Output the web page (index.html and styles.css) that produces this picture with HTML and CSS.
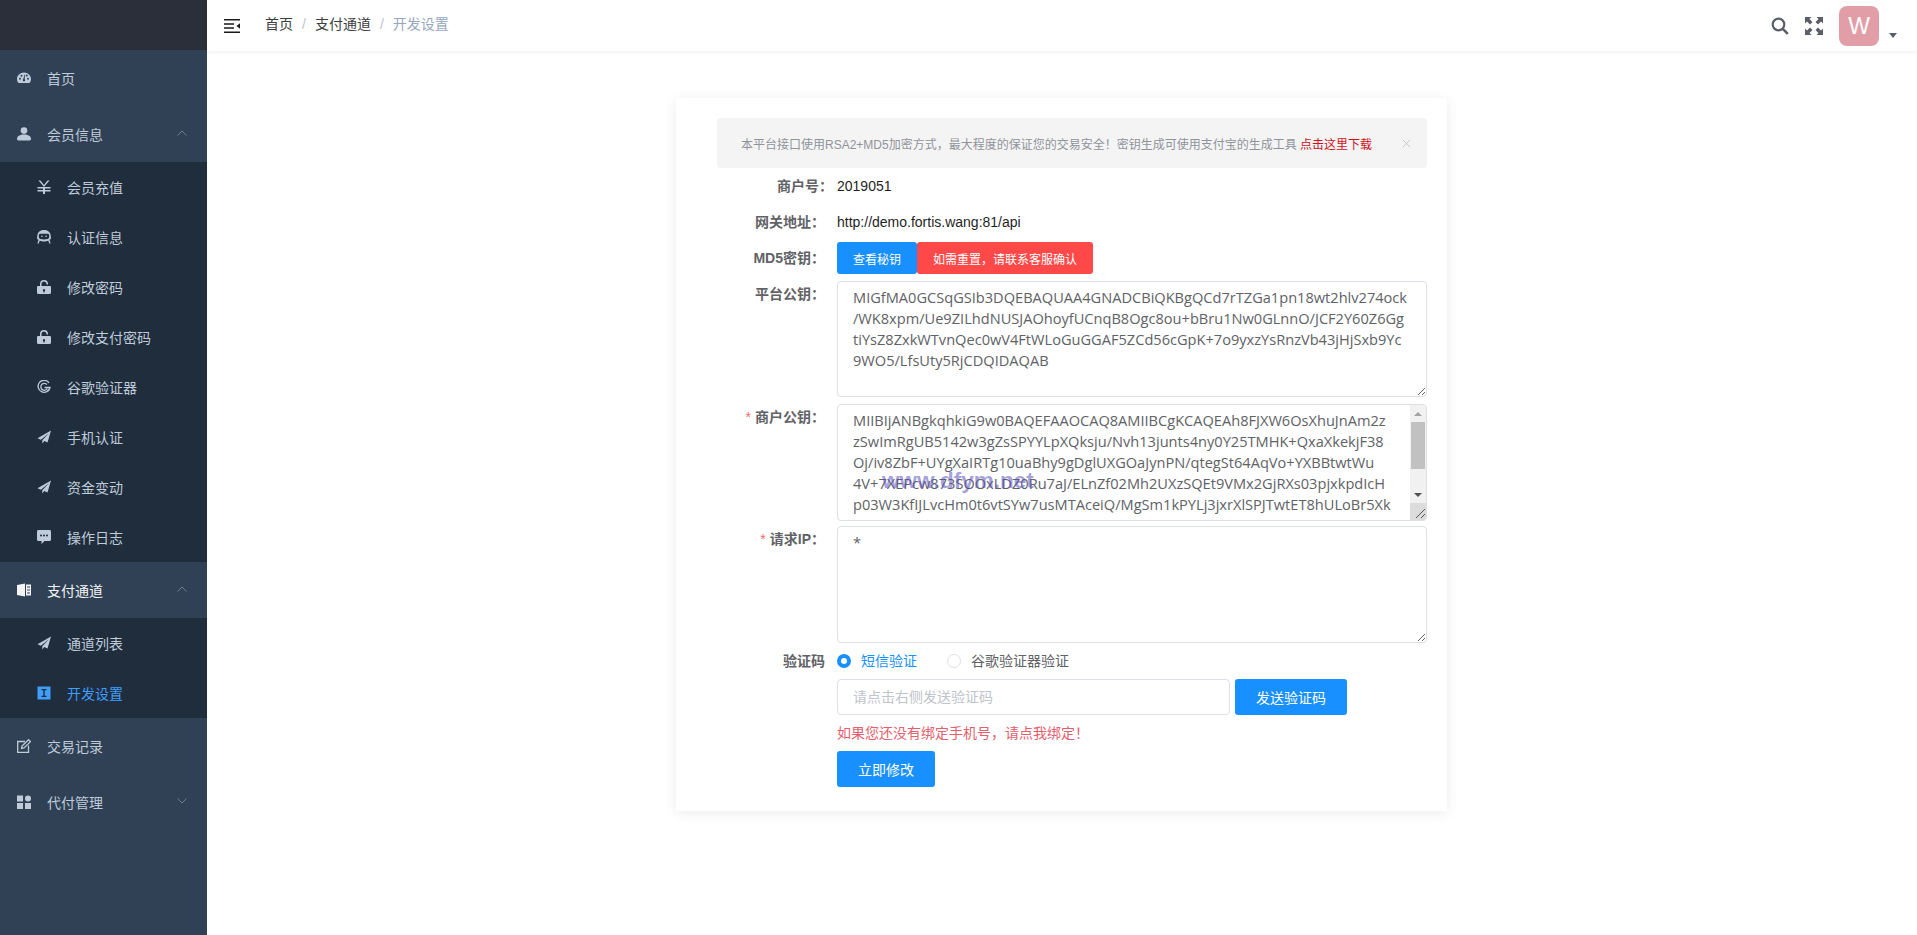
FILE: index.html
```html
<!DOCTYPE html>
<html lang="zh-CN">
<head>
    <meta charset="UTF-8">
    <meta name="viewport" content="width=device-width, initial-scale=1.0">
    <title>开发设置</title>
    <link rel="stylesheet" href="styles.css">
</head>
<body>
    <div class="app">
        <aside class="sidebar">
            <div class="logo"></div>
            <nav class="menu">
                <a class="menu-title">
                    <svg class="icon" viewBox="0 0 14 14"><path fill-rule="evenodd" d="M7 1.5C3 1.5 0 4.5 0 8.2c0 1.4.4 2.5 1 3.3.2.3.5.4.8.4h10.4c.3 0 .6-.1.8-.4.6-.8 1-1.900 1-3.300C14 4.500 11 1.500 7 1.500zM3 8.800a1 1 0 1 1 0-2 1 1 0 0 1 0 2zm1.500-3a1 1 0 1 1 0-2 1 1 0 0 1 0 2zM7 10.500a1.300 1.300 0 0 1-.6-2.400l.9-4.300h.6l-.2 4.400A1.300 1.300 0 0 1 7 10.500zm2.700-5a1 1 0 1 1 0-2 1 1 0 0 1 0 2zm1.300 3.300a1 1 0 1 1 0-2 1 1 0 0 1 0 2z"/></svg>
                    <span>首页</span>
                </a>
                <a class="menu-title">
                    <svg class="icon" viewBox="0 0 14 14"><circle cx="7" cy="3.6" r="3.3"/><path d="M0 12c0-3 3-4.6 7-4.6s7 1.6 7 4.6c0 1-.6 1.4-1.5 1.4h-11C.6 13.4 0 13 0 12z"/></svg>
                    <span>会员信息</span>
                    <svg class="arrow" viewBox="0 0 10 6"><path d="M.5 5.500 5 1l4.500 4.500"/></svg>
                </a>
                <div class="submenu">
                    <a class="sub-item">
                        <svg class="icon" viewBox="0 0 14 14"><path d="M1.500.5 7 7 12.500.5h-2L7 4.900 3.500.5zM6 7h2v7H6z"/><path d="M.5 7h13v1.500H.5zM.5 10h13v1.500H.5z"/></svg>
                        <span>会员充值</span>
                    </a>
                    <a class="sub-item">
                        <svg class="icon" viewBox="0 0 14 14"><path fill-rule="evenodd" d="M7 0C3.600 0 1 1.800.5 4.500L0 7.800c0 1 .8 1.700 1.500 2L.4 13.600h1.300l1.100-3.200c1 .6 2.600 1 4.200 1s3.200-.4 4.200-1l1.100 3.200h1.300L12.500 9.800c.7-.3 1.500-1 1.500-2l-.5-3.300C13 1.800 10.400 0 7 0zM3.300 3.800h7.400c.9 0 1.500.7 1.500 1.500v1.800c0 1-.8 1.700-1.700 1.900-1 .3-2.200.5-3.500.5s-2.500-.2-3.500-.5c-.9-.2-1.700-.9-1.700-1.900V5.300c0-.8.600-1.500 1.500-1.500z"/><circle cx="4.900" cy="6.200" r=".8"/><circle cx="9.100" cy="6.200" r=".8"/></svg>
                        <span>认证信息</span>
                    </a>
                    <a class="sub-item">
                        <svg class="icon" viewBox="0 0 14 14"><path fill-rule="evenodd" d="M3 6V4a4 4 0 0 1 8 0v.500H9.500V4a2.500 2.500 0 0 0-5 0v2h8.300c.7 0 1.200.5 1.200 1.200v5.600c0 .7-.5 1.200-1.200 1.200H1.200C.5 14 0 13.500 0 12.800V7.200C0 6.500.5 6 1.200 6zm4 3a1.200 1.200 0 0 0-.6 2.200v1.300h1.200v-1.300A1.200 1.200 0 0 0 7 9z"/></svg>
                        <span>修改密码</span>
                    </a>
                    <a class="sub-item">
                        <svg class="icon" viewBox="0 0 14 14"><path fill-rule="evenodd" d="M3 6V4a4 4 0 0 1 8 0v.500H9.500V4a2.500 2.500 0 0 0-5 0v2h8.300c.7 0 1.200.5 1.200 1.200v5.600c0 .7-.5 1.200-1.200 1.200H1.200C.5 14 0 13.500 0 12.800V7.200C0 6.500.5 6 1.200 6zm4 3a1.200 1.200 0 0 0-.6 2.200v1.300h1.200v-1.300A1.200 1.200 0 0 0 7 9z"/></svg>
                        <span>修改支付密码</span>
                    </a>
                    <a class="sub-item">
                        <svg class="icon icon-line" viewBox="0 0 14 14"><path d="M12 2.800A6 6 0 1 0 13 7.500H7.500"/><path d="M10 4.500A3.500 3.500 0 1 0 10.400 8.500"/></svg>
                        <span>谷歌验证器</span>
                    </a>
                    <a class="sub-item">
                        <svg class="icon" viewBox="0 0 14 14"><path d="M14 .5.500 8.200l3.400 1.500L12 3 5.300 10.300v3.200l2-2.400 3.200 1.400z"/></svg>
                        <span>手机认证</span>
                    </a>
                    <a class="sub-item">
                        <svg class="icon" viewBox="0 0 14 14"><path d="M14 .5.500 8.200l3.400 1.500L12 3 5.300 10.300v3.200l2-2.400 3.200 1.400z"/></svg>
                        <span>资金变动</span>
                    </a>
                    <a class="sub-item">
                        <svg class="icon" viewBox="0 0 14 14"><path fill-rule="evenodd" d="M1.500 0h11C13.400 0 14 .6 14 1.500v8c0 .9-.6 1.500-1.500 1.500H7.500L4.500 14v-3h-3C.6 11 0 10.400 0 9.500v-8C0 .6.600 0 1.500 0zM4 4.500a1 1 0 1 0 0 2 1 1 0 0 0 0-2zm3 0a1 1 0 1 0 0 2 1 1 0 0 0 0-2zm3 0a1 1 0 1 0 0 2 1 1 0 0 0 0-2z"/></svg>
                        <span>操作日志</span>
                    </a>
                </div>
                <a class="menu-title menu-open">
                    <svg class="icon" viewBox="0 0 14 14"><path d="M0 2 8 .5v13L0 12z"/><path d="M9 1.500h5v11H9zM10 3.500v1h3v-1zM10 6.500v1h3v-1zM10 9.500v1h3v-1z" fill-rule="evenodd"/></svg>
                    <span>支付通道</span>
                    <svg class="arrow" viewBox="0 0 10 6"><path d="M.5 5.500 5 1l4.500 4.500"/></svg>
                </a>
                <div class="submenu">
                    <a class="sub-item">
                        <svg class="icon" viewBox="0 0 14 14"><path d="M14 .5.500 8.200l3.400 1.500L12 3 5.300 10.300v3.200l2-2.400 3.200 1.400z"/></svg>
                        <span>通道列表</span>
                    </a>
                    <a class="sub-item active">
                        <svg class="icon" viewBox="0 0 14 14"><path fill-rule="evenodd" d="M.5.500h13v13H.5zM4.500 3v1.200h1.800v5.600H4.500V11h5V9.800H7.700V4.200h1.800V3z"/></svg>
                        <span>开发设置</span>
                    </a>
                </div>
                <a class="menu-title">
                    <svg class="icon icon-line" viewBox="0 0 14 14"><path d="M8 2.500H.7v10.800h10.800V6.500"/><path d="M4.500 9.500 5 7l6.500-6.300 2 2L7 9z"/></svg>
                    <span>交易记录</span>
                </a>
                <a class="menu-title">
                    <svg class="icon" viewBox="0 0 14 14"><path d="M0 .5h6v6H0zM0 8h6v6H0zM8 8h6v6H8z"/><circle cx="11" cy="3.500" r="3"/></svg>
                    <span>代付管理</span>
                    <svg class="arrow" viewBox="0 0 10 6"><path d="M.5.500 5 5l4.500-4.500"/></svg>
                </a>
            </nav>
        </aside>

        <div class="main">
            <header class="navbar">
                <svg class="hamburger" viewBox="0 0 16 14"><path d="M0 0h16v1.600H0zM0 4.200h10v1.600H0zM0 8.200h10v1.600H0zM0 12.400h16V14H0zM16 4.200v5.600L12.500 7z"/></svg>
                <div class="breadcrumb">
                    <a>首页</a>
                    <span class="sep">/</span>
                    <a>支付通道</a>
                    <span class="sep">/</span>
                    <span class="current">开发设置</span>
                </div>
                <div class="nav-right">
                    <svg class="nav-icon" viewBox="0 0 18 18"><circle cx="7.500" cy="7.500" r="5.800" fill="none" stroke="#5a5e66" stroke-width="2.200"/><path d="m11.800 11.800 5 5" stroke="#5a5e66" stroke-width="2.600" fill="none"/></svg>
                    <svg class="nav-icon" viewBox="0 0 18 18"><path fill="#5a5e66" d="M0 0h6.500L4.500 2l3 3L5 7.500l-3-3-2 2zM18 0v6.500l-2-2-3 3L10.500 5l3-3-2-2zM0 18v-6.500l2 2 3-3L7.500 13l-3 3 2 2zM18 18h-6.500l2-2-3-3 2.500-2.500 3 3 2-2z"/></svg>
                    <div class="avatar">W</div>
                    <span class="caret"></span>
                </div>
            </header>

            <div class="content">
                <div class="card">
                    <div class="alert">
                        <span class="alert-text">本平台接口使用RSA2+MD5加密方式，最大程度的保证您的交易安全！密钥生成可使用支付宝的生成工具 <a class="alert-link">点击这里下载</a></span>
                        <svg class="alert-close" viewBox="0 0 10 10"><path d="m1 1 8 8M9 1 1 9"/></svg>
                    </div>

                    <div class="row row-text row-merchant">
                        <label class="label">商户号：</label>
                        <div class="value">2019051</div>
                    </div>
                    <div class="row row-text row-gateway">
                        <label class="label">网关地址：</label>
                        <div class="value">http://demo.fortis.wang:81/api</div>
                    </div>
                    <div class="row row-md5">
                        <label class="label">MD5密钥：</label>
                        <div class="value btn-group">
                            <button class="btn btn-primary btn-key">查看秘钥</button>
                            <button class="btn btn-danger">如需重置，请联系客服确认</button>
                        </div>
                    </div>
                    <div class="row row-area">
                        <label class="label">平台公钥：</label>
                        <div class="value"><textarea class="area area-platform" spellcheck="false">MIGfMA0GCSqGSIb3DQEBAQUAA4GNADCBiQKBgQCd7rTZGa1pn18wt2hlv274ock
/WK8xpm/Ue9ZILhdNUSJAOhoyfUCnqB8Ogc8ou+bBru1Nw0GLnnO/JCF2Y60Z6Gg
tiYsZ8ZxkWTvnQec0wV4FtWLoGuGGAF5ZCd56cGpK+7o9yxzYsRnzVb43jHjSxb9Yc
9WO5/LfsUty5RjCDQIDAQAB</textarea></div>
                    </div>
                    <div class="row row-area">
                        <label class="label"><i>*</i>商户公钥：</label>
                        <div class="value area-wrap">
                            <textarea class="area area-merchant" spellcheck="false">MIIBIjANBgkqhkiG9w0BAQEFAAOCAQ8AMIIBCgKCAQEAh8FJXW6OsXhuJnAm2z
zSwImRgUB5142w3gZsSPYYLpXQksju/Nvh13junts4ny0Y25TMHK+QxaXkekjF38
Oj/iv8ZbF+UYgXaIRTg10uaBhy9gDglUXGOaJynPN/qtegSt64AqVo+YXBBtwtWu
4V+7XEPcw873SOOxLDZ0Ru7aJ/ELnZf02Mh2UXzSQEt9VMx2GjRXs03pjxkpdIcH
p03W3KfIJLvcHm0t6vtSYw7usMTAceiQ/MgSm1kPYLj3jxrXlSPJTwtET8hULoBr5Xk
Qm2dV7sKaT9nYw4GfE1cZp6uHrJ0bLx3NoWi8tPeMy5AgDsKvFh2UqRz7IjXC1On
Gb4lT6wYeIDAQAB</textarea>
                            <span class="watermark">www.dfym.net</span>
                            <!-- headless chrome hides real scrollbars, so this one is drawn -->
                            <div class="scrollbar">
                                <span class="scroll-btn"><b class="tri-up"></b></span>
                                <span class="scroll-thumb"></span>
                                <span class="scroll-track"></span>
                                <span class="scroll-btn"><b class="tri-down"></b></span>
                                <span class="scroll-corner">
                                    <svg viewBox="0 0 16 16"><path d="M6 15 15 6M11 15l4-4"/></svg>
                                </span>
                            </div>
                        </div>
                    </div>
                    <div class="row row-area row-ip">
                        <label class="label"><i>*</i>请求IP：</label>
                        <div class="value"><textarea class="area area-ip" spellcheck="false">*</textarea></div>
                    </div>

                    <div class="row row-radio">
                        <label class="label">验证码</label>
                        <div class="value radios">
                            <span class="radio radio-on"><b></b>短信验证</span>
                            <span class="radio"><b></b>谷歌验证器验证</span>
                        </div>
                    </div>
                    <div class="row row-code">
                        <div class="value code-line">
                            <input class="code-input" type="text" placeholder="请点击右侧发送验证码">
                            <button class="btn btn-primary btn-send">发送验证码</button>
                        </div>
                    </div>
                    <div class="row row-tip">
                        <div class="value tip">如果您还没有绑定手机号，请点我绑定！</div>
                    </div>
                    <div class="row row-submit">
                        <div class="value"><button class="btn btn-primary btn-submit">立即修改</button></div>
                    </div>
                </div>
            </div>
        </div>
    </div>
</body>
</html>
```

FILE: styles.css
```css
* {
    box-sizing: border-box;
}

html, body {
    height: 100%;
}

body {
    margin: 0;
    background: #fff;
    color: #606266;
    font-family: "Liberation Sans", "Noto Sans CJK SC", sans-serif;
    font-size: 14px;
    overflow: hidden;
}

.app {
    display: flex;
    height: 100%;
}

/* sidebar */
.sidebar {
    width: 207px;
    flex: none;
    background: #304156;
}

.logo {
    height: 50px;
    background: #2b2f3a;
}

.menu-title,
.sub-item {
    display: flex;
    align-items: center;
    color: #bfcbd9;
}

.menu-title {
    height: 56px;
    padding: 0 20px 0 17px;
}

.menu-open {
    color: #f4f4f5;
}

.submenu {
    background: #1f2d3d;
}

.sub-item {
    height: 50px;
    padding-left: 37px;
}

.sub-item.active {
    color: #409eff;
}

.icon {
    width: 14px;
    height: 14px;
    flex: none;
    margin-right: 16px;
    fill: currentColor;
}

.icon-line {
    fill: none;
    stroke: currentColor;
    stroke-width: 1.3;
}

.arrow {
    width: 10px;
    height: 6px;
    margin-left: auto;
    margin-top: -2px;
    fill: none;
    stroke: #6f7c8c;
    stroke-width: 1;
}

/* top bar */
.main {
    flex: 1;
    min-width: 0;
}

.navbar {
    display: flex;
    align-items: center;
    height: 51px;
    padding: 0 20px 0 17px;
    box-shadow: 0 1px 4px rgba(0, 21, 41, .08);
}

.hamburger {
    width: 16px;
    height: 14px;
    fill: #1b1b1b;
}

.breadcrumb {
    display: flex;
    align-items: baseline;
    margin: -3px 0 0 25px;
    color: #3c3e42;
    line-height: 20px;
}

.sep {
    margin: 0 9px;
    color: #c0c4cc;
}

.current {
    color: #97a8be;
}

.nav-right {
    display: flex;
    align-items: center;
    margin-left: auto;
}

.nav-icon {
    width: 18px;
    height: 18px;
    margin-right: 16px;
}

.avatar {
    width: 40px;
    height: 40px;
    border-radius: 8px;
    background: #e29ea7;
    color: #fff;
    font-size: 23px;
    line-height: 40px;
    text-align: center;
}

.caret {
    width: 0;
    height: 0;
    margin: 20px 0 0 10px;
    border: 4px solid transparent;
    border-top: 5px solid #5a5e66;
    border-bottom: 0;
}

/* form card */
.content {
    display: flex;
    justify-content: center;
    padding: 47px 263px 0 262px;
}

.card {
    width: 771px;
    height: 713px;
    padding: 20px 20px 0 41px;
    background: #fff;
    box-shadow: 0 2px 12px rgba(0, 0, 0, .08);
}

.alert {
    display: flex;
    align-items: center;
    height: 50px;
    padding: 0 16px 0 24px;
    border-radius: 4px;
    background: #f4f4f5;
}

.alert-text {
    font-size: 12px;
    color: #909399;
    white-space: nowrap;
}

.alert-link {
    color: #d0111b;
}

.alert-close {
    width: 9px;
    height: 9px;
    margin-left: auto;
    fill: none;
    stroke: #c0c4cc;
    stroke-width: 1;
}

.row {
    display: flex;
}

.label {
    width: 120px;
    flex: none;
    padding-right: 12px;
    font-weight: bold;
    text-align: right;
    color: #606266;
}

.label i {
    margin-right: 4px;
    color: #f56c6c;
    font-style: normal;
    font-weight: normal;
}

.value {
    flex: 1;
    min-width: 0;
    color: #1f1f1f;
}

.row-text .label,
.row-text .value {
    line-height: 20px;
}

.row-merchant {
    margin-top: 8px;
}

.row-merchant .label {
    padding-right: 4px;
}

.row-gateway {
    margin-top: 16px;
}

.row-md5 {
    margin-top: 10px;
    align-items: center;
}

.row-md5 .label {
    padding-bottom: 2px;
}

.row-area {
    margin-top: 7px;
}

.row-area .label {
    padding-top: 2px;
}

.row-ip {
    margin-top: 5px;
}

.btn {
    height: 32px;
    border: 0;
    border-radius: 3px;
    color: #fff;
    font: inherit;
    font-size: 12px;
    cursor: pointer;
}

.btn-group {
    display: flex;
}

.btn-primary {
    background: #1890ff;
}

.btn-danger {
    width: 176px;
    background: #ff4949;
}

.btn-key {
    width: 80px;
}

.area-wrap {
    position: relative;
}

.area {
    display: block;
    width: 100%;
    padding: 5px 15px;
    border: 1px solid #dcdfe6;
    border-radius: 4px;
    color: #606266;
    font-family: "Open Sans", "Noto Sans CJK SC", sans-serif;
    font-size: 14.6px;
    line-height: 21px;
    white-space: pre;
    overflow: hidden;
    outline: none;
}

.area-platform {
    height: 116px;
}

.area-merchant {
    height: 117px;
    padding-right: 32px;
}

.area-ip {
    height: 117px;
}

.scrollbar {
    position: absolute;
    top: 1px;
    right: 1px;
    bottom: 1px;
    width: 16px;
    display: flex;
    flex-direction: column;
    background: #f1f1f1;
    border-radius: 0 3px 3px 0;
}

.scroll-btn {
    display: flex;
    align-items: center;
    justify-content: center;
    height: 17px;
    flex: none;
}

.tri-up,
.tri-down {
    width: 0;
    height: 0;
    border: 4px solid transparent;
}

.tri-up {
    border-top: 0;
    border-bottom: 4px solid #a3a3a3;
}

.tri-down {
    border-top: 4px solid #505050;
    border-bottom: 0;
}

.scroll-thumb {
    height: 47px;
    flex: none;
    margin: 0 1px 0 1px;
    background: #c1c1c1;
}

.scroll-track {
    flex: 1;
}

.scroll-corner {
    height: 17px;
    flex: none;
    background: #dcdcdc;
    border-radius: 0 0 3px 0;
}

.scroll-corner svg {
    display: block;
    width: 16px;
    height: 16px;
    fill: none;
    stroke: #555;
    stroke-width: 1;
}

.watermark {
    position: absolute;
    left: 45px;
    top: 64px;
    color: rgba(90, 80, 190, .55);
    font-family: "Liberation Sans", sans-serif;
    font-size: 22.5px;
    font-weight: bold;
    pointer-events: none;
}

.row-radio {
    margin-top: 8px;
    align-items: center;
    height: 18px;
}

.radios {
    display: flex;
    color: #606266;
}

.radio {
    display: flex;
    align-items: center;
    margin-right: 30px;
}

.radio b {
    width: 14px;
    height: 14px;
    margin: 2px 10px 0 0;
    border: 1px solid #dcdfe6;
    border-radius: 50%;
}

.radio-on {
    color: #1890ff;
}

.radio-on b {
    border: 4px solid #1890ff;
    background: #fff;
}

.row-code,
.row-tip,
.row-submit {
    padding-left: 120px;
}

.row-code {
    margin-top: 10px;
}

.code-line {
    display: flex;
    gap: 5px;
}

.code-input {
    width: 393px;
    height: 36px;
    padding: 0 15px;
    border: 1px solid #dcdfe6;
    border-radius: 4px;
    font: inherit;
    outline: none;
}

.code-input::placeholder {
    color: #c0c4cc;
}

.btn-send {
    width: 112px;
    height: 36px;
    font-size: 14px;
}

.row-tip {
    margin-top: 8px;
}

.tip {
    color: #e4606d;
    line-height: 20px;
}

.row-submit {
    margin-top: 8px;
}

.btn-submit {
    width: 98px;
    height: 36px;
    font-size: 14px;
}
```
